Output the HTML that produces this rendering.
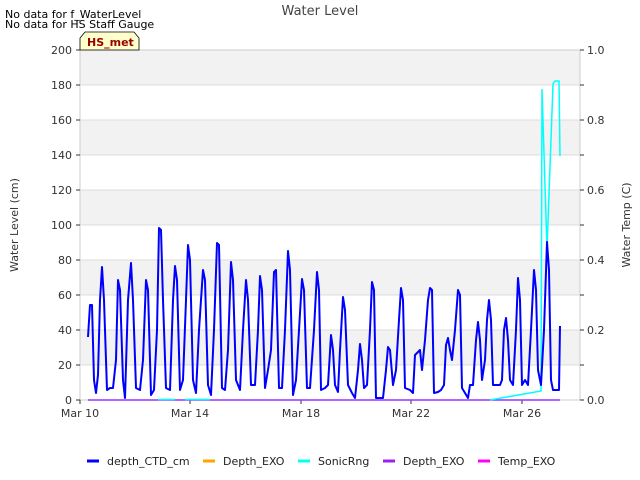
<!DOCTYPE html>
<html><head><meta charset="utf-8"><style>
body{margin:0;background:#fff;}
svg{display:block;font-family:"DejaVu Sans","Liberation Sans",sans-serif;}
</style></head><body>
<svg width="640" height="480" viewBox="0 0 640 480" xmlns="http://www.w3.org/2000/svg">
<rect x="80" y="50" width="500" height="350" fill="#fff"/>
<g fill="#f2f2f2">
<rect x="80" y="50" width="500" height="35"/>
<rect x="80" y="120" width="500" height="35"/>
<rect x="80" y="190" width="500" height="35"/>
<rect x="80" y="260" width="500" height="35"/>
<rect x="80" y="330" width="500" height="35"/>
</g>
<g stroke="#dcdcdc" stroke-width="1">
<line x1="80" x2="580" y1="85" y2="85"/><line x1="80" x2="580" y1="120" y2="120"/>
<line x1="80" x2="580" y1="155" y2="155"/><line x1="80" x2="580" y1="190" y2="190"/>
<line x1="80" x2="580" y1="225" y2="225"/><line x1="80" x2="580" y1="260" y2="260"/>
<line x1="80" x2="580" y1="295" y2="295"/><line x1="80" x2="580" y1="330" y2="330"/>
<line x1="80" x2="580" y1="365" y2="365"/>
</g>
<rect x="80" y="50" width="500" height="350" fill="none" stroke="#ccc"/>
<g stroke="#333" stroke-width="1">
<line x1="76" x2="80" y1="50" y2="50"/><line x1="76" x2="80" y1="85" y2="85"/><line x1="76" x2="80" y1="120" y2="120"/><line x1="76" x2="80" y1="155" y2="155"/><line x1="76" x2="80" y1="190" y2="190"/><line x1="76" x2="80" y1="225" y2="225"/><line x1="76" x2="80" y1="260" y2="260"/><line x1="76" x2="80" y1="295" y2="295"/><line x1="76" x2="80" y1="330" y2="330"/><line x1="76" x2="80" y1="365" y2="365"/><line x1="76" x2="80" y1="400" y2="400"/>
<line x1="580" x2="584" y1="50" y2="50"/><line x1="580" x2="584" y1="85" y2="85"/><line x1="580" x2="584" y1="120" y2="120"/><line x1="580" x2="584" y1="155" y2="155"/><line x1="580" x2="584" y1="190" y2="190"/><line x1="580" x2="584" y1="225" y2="225"/><line x1="580" x2="584" y1="260" y2="260"/><line x1="580" x2="584" y1="295" y2="295"/><line x1="580" x2="584" y1="330" y2="330"/><line x1="580" x2="584" y1="365" y2="365"/><line x1="580" x2="584" y1="400" y2="400"/>
<line x1="80" x2="80" y1="400" y2="404"/><line x1="190" x2="190" y1="400" y2="404"/><line x1="301" x2="301" y1="400" y2="404"/><line x1="411" x2="411" y1="400" y2="404"/><line x1="522" x2="522" y1="400" y2="404"/>
</g>
<g font-size="11" fill="#333" text-anchor="end">
<text x="72" y="54">200</text><text x="72" y="89">180</text><text x="72" y="124">160</text><text x="72" y="159">140</text><text x="72" y="194">120</text><text x="72" y="229">100</text><text x="72" y="264">80</text><text x="72" y="299">60</text><text x="72" y="334">40</text><text x="72" y="369">20</text><text x="72" y="404">0</text>
</g>
<g font-size="11" fill="#333">
<text x="587" y="54">1.0</text><text x="587" y="124">0.8</text><text x="587" y="194">0.6</text><text x="587" y="264">0.4</text><text x="587" y="334">0.2</text><text x="587" y="404">0.0</text>
</g>
<g font-size="11" fill="#333" text-anchor="middle">
<text x="80" y="417">Mar 10</text><text x="190" y="417">Mar 14</text><text x="301" y="417">Mar 18</text><text x="411" y="417">Mar 22</text><text x="522" y="417">Mar 26</text>
</g>
<text x="320" y="15" font-size="13" fill="#444" text-anchor="middle">Water Level</text>
<text x="18" y="225" font-size="11" fill="#333" text-anchor="middle" transform="rotate(-90 18 225)">Water Level (cm)</text>
<text x="630" y="225" font-size="11" fill="#333" text-anchor="middle" transform="rotate(-90 630 225)">Water Temp (C)</text>
<text x="5" y="18" font-size="11" fill="#000">No data for f_WaterLevel</text>
<text x="5" y="28" font-size="11" fill="#000">No data for HS Staff Gauge</text>
<path d="M80,50 L80,38 L85,32 L134,32 L139,38 L139,50 Z" fill="#ffffcc" stroke="#000" stroke-width="0.8"/>
<text x="87" y="46" font-size="11" font-weight="bold" fill="#990000">HS_met</text>
<line x1="88" x2="560" y1="400" y2="400" stroke="#9b30ff" stroke-width="1.5"/>
<line x1="158" x2="175" y1="399.5" y2="399.5" stroke="#00ffff" stroke-width="1.5"/>
<line x1="185" x2="210" y1="399.5" y2="399.5" stroke="#00ffff" stroke-width="1.5"/>
<polyline fill="none" stroke="#00ffff" stroke-width="1.5" points="490,400 541,391 542,89 547,250 553,84 555,81 559,81 560,156"/>
<polyline fill="none" stroke="#0000ff" stroke-width="2" stroke-linejoin="round" points="88,337 90,305 92,305 94,380 96,393 98,375 100,300 102,267 104,300 107,390 110,388 113,388 116,360 118,280 120,290 123,380 125,398 128,300 131,263 133,300 136,388 140,390 143,360 146,280 148,290 151,395 154,390 157,330 159,228 161,230 163,300 166,388 170,390 173,300 175,266 177,280 180,390 183,380 186,300 188,245 190,260 193,380 196,393 199,330 203,270 205,280 208,385 211,395 214,330 217,243 219,245 222,388 225,390 228,350 231,262 233,280 236,380 240,390 243,330 246,280 248,300 251,385 255,385 258,330 260,276 262,290 265,388 268,370 271,350 274,272 276,270 279,388 282,388 285,330 288,251 290,270 293,395 296,380 299,330 302,279 304,290 307,388 310,388 314,330 317,272 319,290 321,390 325,388 328,385 331,335 333,350 335,385 338,392 340,350 343,297 345,310 348,385 352,393 355,398 358,370 360,344 362,360 364,388 367,385 370,330 372,282 374,290 376,398 380,398 383,398 386,370 388,347 390,350 393,385 396,370 399,320 401,288 403,300 405,388 410,390 413,393 415,355 418,352 420,350 422,370 425,340 428,300 430,288 432,290 434,393 438,392 441,390 444,385 446,345 448,338 450,350 452,360 455,330 458,290 460,295 462,388 465,393 468,398 470,385 473,385 476,340 478,322 480,340 482,380 485,360 487,320 489,300 491,320 493,385 497,385 500,385 502,380 504,330 506,318 508,340 510,380 513,385 516,330 518,278 520,300 522,385 525,380 528,385 531,330 534,270 536,290 538,370 541,385 544,330 547,242 549,270 551,380 553,390 556,390 559,390 560,326"/>
<g stroke-width="3">
<line x1="87" x2="99" y1="461" y2="461" stroke="#0000ff"/>
<line x1="203" x2="215" y1="461" y2="461" stroke="#ffa500"/>
<line x1="298" x2="310" y1="461" y2="461" stroke="#00ffff"/>
<line x1="383" x2="395" y1="461" y2="461" stroke="#a020f0"/>
<line x1="478" x2="490" y1="461" y2="461" stroke="#ff00ff"/>
</g>
<g font-size="11" fill="#222">
<text x="107" y="465">depth_CTD_cm</text>
<text x="223" y="465">Depth_EXO</text>
<text x="318" y="465">SonicRng</text>
<text x="403" y="465">Depth_EXO</text>
<text x="498" y="465">Temp_EXO</text>
</g>
</svg>
</body></html>
